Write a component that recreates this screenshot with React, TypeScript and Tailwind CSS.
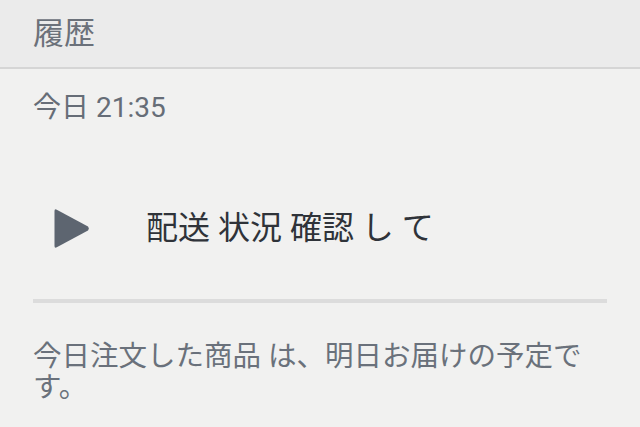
import React from "react";

export default function App() {
  const font = { fontFamily: "Roboto, 'Noto Sans CJK JP', sans-serif" };
  return (
    <div className="w-[640px] h-[427px] overflow-hidden bg-[#f1f1f0]" style={font}>
      <div className="h-[69px] bg-[#ebebeb] border-b-2 border-[#d5d5d5] flex items-center px-[33px]">
        <span className="text-[31px] leading-none text-[#6b717a]">履歴</span>
      </div>
      <div className="px-[33px]">
        <div className="pt-[21px] h-[57px] text-[28px] leading-[36px] text-[#666d77]">今日 21:35</div>
        <div className="mt-[62px] h-[80px] flex items-center pl-[20px]">
          <svg width="37" height="41" viewBox="0 0 37 41" className="shrink-0">
            <path d="M1.5 3 Q1.5 0.5 3.8 1.7 L35 18.6 Q36.8 20.5 35 22.4 L3.8 39.3 Q1.5 40.5 1.5 38 Z" fill="#5d6570" />
          </svg>
          <span className="ml-[56px] text-[32px] leading-none text-[#2f3339]">配送 状況 確認 し て</span>
        </div>
        <div className="mt-[31px] h-[4px] bg-[#dcdcdc]" />
        <p className="mt-[38px] max-w-[560px] text-[28.5px] leading-[31px] text-[#6a717b]">今日注文した商品 は、明日お届けの予定です。</p>
      </div>
    </div>
  );
}
